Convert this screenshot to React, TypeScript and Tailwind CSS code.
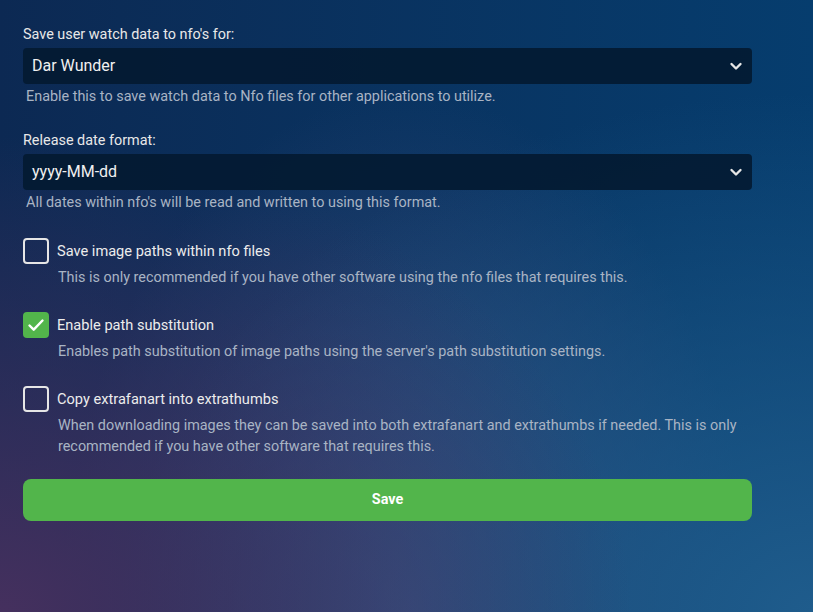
import { useState } from 'react'

function Chevron() {
  return (
    <svg width="14" height="14" viewBox="0 0 14 14" className="text-[#e6e6e6]">
      <path d="M2.5 5l4.5 4.5L11.5 5" fill="none" stroke="currentColor" strokeWidth="2.4" strokeLinecap="round" strokeLinejoin="round" />
    </svg>
  )
}

function SelectField({ label, value, help }: { label: string; value: string; help: string }) {
  return (
    <div>
      <label className="block text-[14.4px] leading-[20px] text-[#e8e8e8] mb-[3px]">{label}</label>
      <div className="flex items-center justify-between h-[36px] rounded-[4px] bg-[#031a31]/90 pl-[9px] pr-[9px]">
        <span className="text-[16px] text-[#f0f0f0]">{value}</span>
        <Chevron />
      </div>
      <p className="mt-[4px] text-[14.4px] leading-[18px] text-[#a9b4c4] pl-[3px]">{help}</p>
    </div>
  )
}

function CheckRow({
  label,
  help,
  checked,
  onToggle,
}: {
  label: string
  help: string
  checked: boolean
  onToggle: () => void
}) {
  return (
    <div>
      <button onClick={onToggle} className="flex items-center gap-[8px] text-left">
        <span
          className={`flex items-center justify-center w-[26px] h-[26px] rounded-[4px] ${
            checked ? 'bg-[#52b54b]' : 'border-2 border-[#e6e6e6]'
          }`}
        >
          {checked && (
            <svg width="20" height="20" viewBox="0 0 20 20">
              <path d="M3.5 10.5l4.2 4.2L16.5 5.5" fill="none" stroke="#fff" strokeWidth="2.4" strokeLinecap="round" strokeLinejoin="round" />
            </svg>
          )}
        </span>
        <span className="text-[14.6px] leading-[20px] text-[#ececec]">{label}</span>
      </button>
      <p className="mt-[3px] pl-[35px] text-[14.4px] leading-[21px] text-[#a9b4c4]">{help}</p>
    </div>
  )
}

export default function App() {
  const [imagePaths, setImagePaths] = useState(false)
  const [pathSub, setPathSub] = useState(true)
  const [extraThumbs, setExtraThumbs] = useState(false)

  return (
    <div
      className="min-h-[612px] w-full bg-[radial-gradient(ellipse_at_0%_100%,#45305e_0%,transparent_55%),radial-gradient(ellipse_at_100%_100%,#1f5c8c_0%,transparent_60%),radial-gradient(ellipse_at_50%_100%,#3b4a7a_0%,transparent_60%),linear-gradient(to_right,#0c2953,#063d6e)]"
      style={{ fontFamily: 'Roboto, "Noto Sans", sans-serif' }}
    >
      <div className="w-[729px] ml-[23px] pt-[25px] pb-[40px]">
        <SelectField
          label="Save user watch data to nfo's for:"
          value="Dar Wunder"
          help="Enable this to save watch data to Nfo files for other applications to utilize."
        />
        <div className="mt-[25px]">
          <SelectField
            label="Release date format:"
            value="yyyy-MM-dd"
            help="All dates within nfo's will be read and written to using this format."
          />
        </div>

        <div className="mt-[26px] flex flex-col gap-[24px]">
          <CheckRow
            label="Save image paths within nfo files"
            help="This is only recommended if you have other software using the nfo files that requires this."
            checked={imagePaths}
            onToggle={() => setImagePaths(!imagePaths)}
          />
          <CheckRow
            label="Enable path substitution"
            help="Enables path substitution of image paths using the server's path substitution settings."
            checked={pathSub}
            onToggle={() => setPathSub(!pathSub)}
          />
          <CheckRow
            label="Copy extrafanart into extrathumbs"
            help="When downloading images they can be saved into both extrafanart and extrathumbs if needed. This is only recommended if you have other software that requires this."
            checked={extraThumbs}
            onToggle={() => setExtraThumbs(!extraThumbs)}
          />
        </div>

        <button className="mt-[22px] w-full h-[42px] rounded-[8px] bg-[#52b54b] text-white text-[14.4px] font-bold">
          Save
        </button>
      </div>
    </div>
  )
}
